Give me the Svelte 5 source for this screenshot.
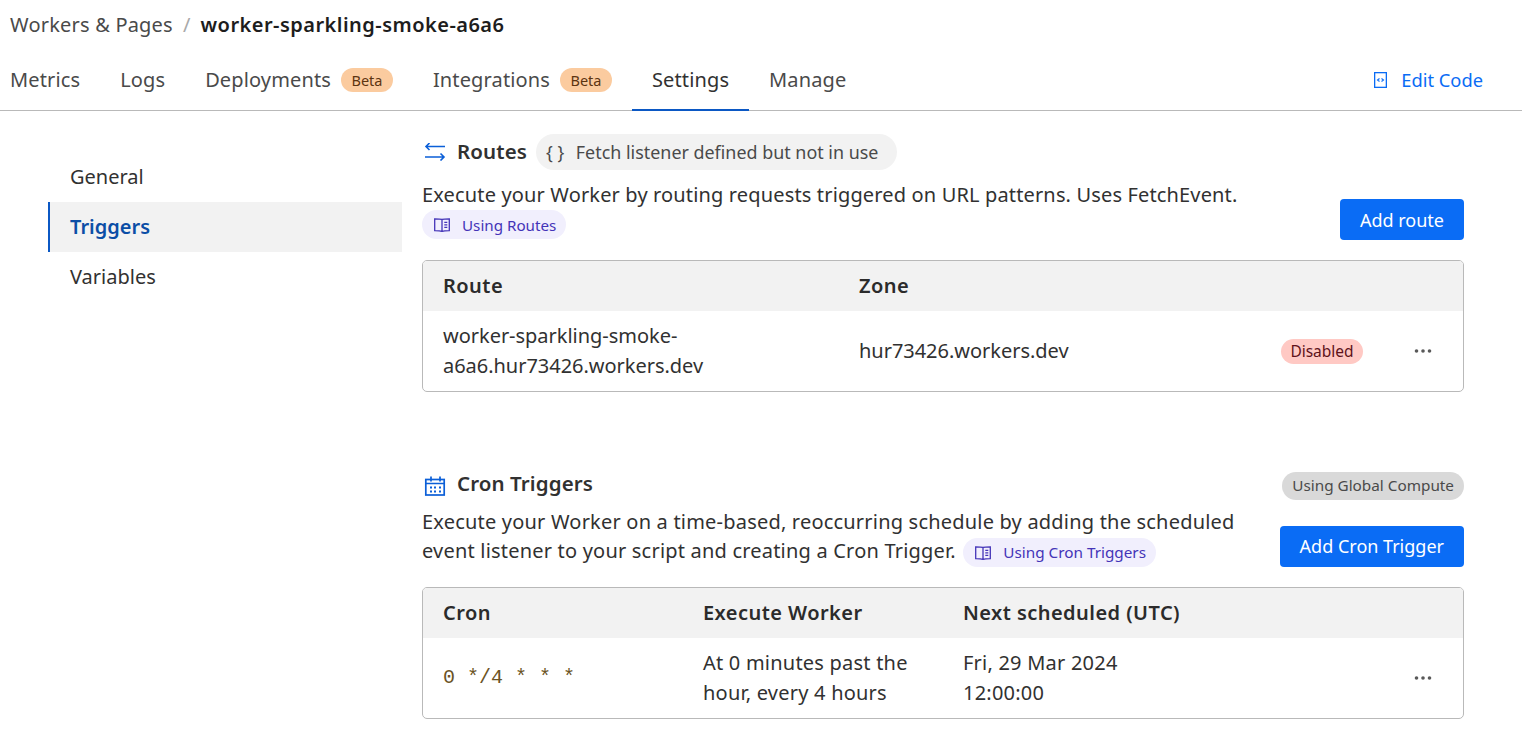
<script>
  const tabs = [
    { label: 'Metrics' },
    { label: 'Logs' },
    { label: 'Deployments', beta: true },
    { label: 'Integrations', beta: true },
    { label: 'Settings', active: true },
    { label: 'Manage' }
  ];
  const sideLinks = ['General', 'Triggers', 'Variables'];
</script>

{#snippet book()}
  <svg class="book" viewBox="0 0 16 14" width="16" height="14" fill="none" stroke="currentColor" stroke-width="1.3">
    <path d="M8 1.4C6 .8 3 .8.7.8v11.8c2.3 0 5.300 0 7.300.8zM8 1.400C10 .8 13 .8 15.300.8v11.800c-2.300 0-5.300 0-7.300.8z" />
    <path d="M10.300 4.300h3M10.300 6.800h3M10.300 9.300h3" stroke-width="1.200" />
  </svg>
{/snippet}

{#snippet dots()}
  <svg class="dots" viewBox="0 0 18 4" width="18" height="4" fill="#595959">
    <circle cx="2.5" cy="2" r="1.8" /><circle cx="9" cy="2" r="1.8" /><circle cx="15.5" cy="2" r="1.8" />
  </svg>
{/snippet}

<div class="page">
  <header>
    <div class="crumbs">
      <span>Workers &amp; Pages</span>
      <span class="slash">/</span>
      <strong>worker-sparkling-smoke-a6a6</strong>
    </div>
    <nav class="tabs">
      {#each tabs as tab}
        <a class="tab" class:active={tab.active} href="#top">
          {tab.label}
          {#if tab.beta}<span class="beta">Beta</span>{/if}
        </a>
      {/each}
      <a class="edit" href="#top">
        <svg viewBox="0 0 13 16" width="13" height="16" fill="none" stroke="currentColor" stroke-width="1.3">
          <rect x="0.65" y="0.65" width="11.7" height="14.7" />
          <path d="M5.500 6.500 3.500 8l2 1.500M7.500 6.500 9.500 8l-2 1.500" stroke-width="1.100" />
        </svg>
        Edit Code
      </a>
    </nav>
  </header>

  <div class="body">
    <aside>
      {#each sideLinks as link}
        <a class="side" class:current={link === 'Triggers'} href="#top">{link}</a>
      {/each}
    </aside>

    <main>
      <section class="routes">
        <div class="title-row">
          <svg class="title-icon" viewBox="0 0 22 18" width="22" height="18" fill="none" stroke="#0b5fd8" stroke-width="1.600">
            <path d="M21 3.500H2M5.500 0 2 3.500 5.500 7M1 14h19M16.500 10.500 20 14l-3.500 3.500" />
          </svg>
          <h2>Routes</h2>
          <span class="listener"><span class="braces">&#123; &#125;</span> Fetch listener defined but not in use</span>
        </div>
        <div class="intro">
          <div class="intro-text">
            <p>Execute your Worker by routing requests triggered on URL patterns. Uses FetchEvent.</p>
            <a class="doc" href="#top">{@render book()} Using Routes</a>
          </div>
          <button>Add route</button>
        </div>
        <div class="table route-table">
          <div class="head">
            <span>Route</span><span>Zone</span>
          </div>
          <div class="row">
            <span>worker-sparkling-smoke-<br />a6a6.hur73426.workers.dev</span>
            <span>hur73426.workers.dev</span>
            <span class="disabled">Disabled</span>
            {@render dots()}
          </div>
        </div>
      </section>

      <section class="cron">
        <div class="title-row spread">
          <svg class="title-icon" viewBox="0 0 22 20" width="22" height="20" fill="none" stroke="#0b5fd8" stroke-width="1.700">
            <rect x="1.800" y="3.500" width="18.400" height="15.500" />
            <path d="M1.800 7.500h18.400M7 0.500v5M16 0.500v5" />
            <path d="M6 11.500h2M10 11.500h2M15 11.500h2M6 15.500h2M10 15.500h2M15 15.500h2" stroke-width="2" />
          </svg>
          <h2>Cron Triggers</h2>
          <span class="compute">Using Global Compute</span>
        </div>
        <div class="intro">
          <p class="intro-text">
            Execute your Worker on a time-based, reoccurring schedule by adding the scheduled<br />
            event listener to your script and creating a Cron Trigger.
            <a class="doc" href="#top">{@render book()} Using Cron Triggers</a>
          </p>
          <button>Add Cron Trigger</button>
        </div>
        <div class="table cron-table">
          <div class="head">
            <span>Cron</span><span>Execute Worker</span><span>Next scheduled (UTC)</span>
          </div>
          <div class="row">
            <code>0 */4 * * *</code>
            <span>At 0 minutes past the<br />hour, every 4 hours</span>
            <span>Fri, 29 Mar 2024<br />12:00:00</span>
            {@render dots()}
          </div>
        </div>
      </section>
    </main>
  </div>
</div>

<style>
  :global(body) {
    margin: 0;
    background: #fff;
  }
  .page {
    font-family: "Noto Sans", "Open Sans", sans-serif;
    font-size: 20px;
    letter-spacing: 0.2px;
    line-height: 30px;
    color: #313131;
    height: 748px;
    overflow: hidden;
  }
  a {
    color: inherit;
    text-decoration: none;
  }
  header {
    border-bottom: 1px solid #b9b9b9;
  }
  .crumbs {
    display: flex;
    align-items: center;
    gap: 10px;
    height: 50px;
    padding-left: 10px;
    color: #4a4a4a;
  }
  .crumbs strong {
    color: #1d1d1d;
    font-weight: 600;
    letter-spacing: 0.47px;
  }
  .slash {
    color: #a9a9a9;
  }
  .tabs {
    display: flex;
    height: 60px;
    align-items: stretch;
  }
  .tab {
    display: flex;
    align-items: center;
    gap: 10px;
    padding: 0 20px;
    color: #4a4a4a;
    letter-spacing: 0.13px;
    margin-bottom: -1px;
    border-bottom: 2px solid transparent;
  }
  .tab:first-child {
    padding-left: 10px;
  }
  .tab.active {
    border-bottom-color: #0b58c4;
    color: #313131;
  }
  .beta {
    background: #fbcb9f;
    border-radius: 12px;
    width: 52px;
    text-align: center;
    font-size: 14.5px;
    letter-spacing: 0;
    line-height: 24px;
    color: #5c3411;
  }
  .edit {
    margin-left: auto;
    margin-right: 39px;
    display: flex;
    align-items: center;
    gap: 14px;
    font-size: 18.3px;
    letter-spacing: 0;
    color: #0a6cf5;
  }
  .body {
    display: flex;
    padding-left: 48px;
  }
  aside {
    width: 354px;
    flex: none;
    padding-top: 41px;
    letter-spacing: 0;
  }
  .side {
    display: block;
    height: 50px;
    line-height: 50px;
    padding-left: 20px;
    border-left: 2px solid transparent;
  }
  .side.current {
    background: #f2f2f2;
    border-left-color: #0b58c4;
    color: #0b4ea6;
    font-weight: 600;
  }
  main {
    width: 1042px;
    margin-left: 20px;
    padding-top: 23px;
  }
  .title-row {
    display: flex;
    align-items: center;
    height: 36px;
  }
  .title-icon {
    margin: 0 11px 0 2px;
    flex: none;
  }
  h2 {
    margin: 0 9px 3px 0;
    font-size: 20.5px;
    font-weight: 600;
    letter-spacing: 0.1px;
  }
  .listener {
    background: #f2f2f2;
    border-radius: 18px;
    height: 36px;
    line-height: 36px;
    padding: 0 19px 0 10px;
    font-size: 17.9px;
    letter-spacing: 0;
    color: #4a4a4a;
  }
  .braces {
    margin-right: 7px;
  }
  .intro {
    display: flex;
    justify-content: space-between;
  }
  .intro-text {
    margin: 0;
  }
  .intro-text p {
    margin: 10px 0 0;
    line-height: 29px;
    letter-spacing: 0.15px;
  }
  .doc {
    display: inline-flex;
    align-items: center;
    gap: 12px;
    height: 29px;
    padding: 0 10px 0 12px;
    border-radius: 15px;
    background: #f1effd;
    color: #4434b8;
    font-size: 15.2px;
    letter-spacing: 0;
    vertical-align: bottom;
  }
  .cron .doc {
    vertical-align: middle;
    margin-left: 2px;
    font-size: 15.3px;
  }
  .book {
    flex: none;
  }
  button {
    font: inherit;
    font-size: 18px;
    letter-spacing: 0;
    color: #fff;
    background: #0a6cf5;
    border: 0;
    border-radius: 4px;
    height: 41px;
    padding: 0 20px;
    flex: none;
  }
  .routes button {
    margin-top: 29px;
  }
  .table {
    border: 1px solid #b9b9b9;
    border-radius: 5px;
    overflow: hidden;
    margin-top: 20px;
  }
  .head,
  .row {
    display: grid;
    align-items: center;
    padding-left: 20px;
  }
  .head {
    height: 50px;
    background: #f2f2f2;
    font-weight: 600;
    letter-spacing: 0.45px;
    color: #2b2b2b;
  }
  .row {
    height: 80px;
    letter-spacing: -0.03px;
  }
  .cron-table .row {
    letter-spacing: 0.22px;
  }
  .route-table .head,
  .route-table .row {
    grid-template-columns: 416px 422px 82px 1fr;
  }
  .cron-table .head,
  .cron-table .row {
    grid-template-columns: 260px 260px 1fr 60px;
  }
  .disabled {
    background: #ffc9c4;
    color: #60121a;
    border-radius: 13px;
    font-size: 15.5px;
    letter-spacing: 0;
    line-height: 25px;
    text-align: center;
  }
  .dots {
    justify-self: end;
    margin-right: 31px;
  }
  .cron {
    margin-top: 80px;
  }
  .spread {
    height: 28px;
  }
  .spread h2 {
    margin-bottom: 6px;
  }
  .compute {
    margin-left: auto;
    background: #d9d9d9;
    border-radius: 14px;
    height: 28px;
    line-height: 27px;
    padding: 0 10px;
    font-size: 15.3px;
    letter-spacing: 0;
    color: #4a4a4a;
  }
  .cron .intro {
    margin-top: 7px;
    line-height: 29px;
  }
  .cron button {
    margin-top: 19px;
  }
  code {
    font-family: "Liberation Mono", monospace;
    font-size: 20px;
    letter-spacing: 0;
    color: #6b5324;
  }
</style>
